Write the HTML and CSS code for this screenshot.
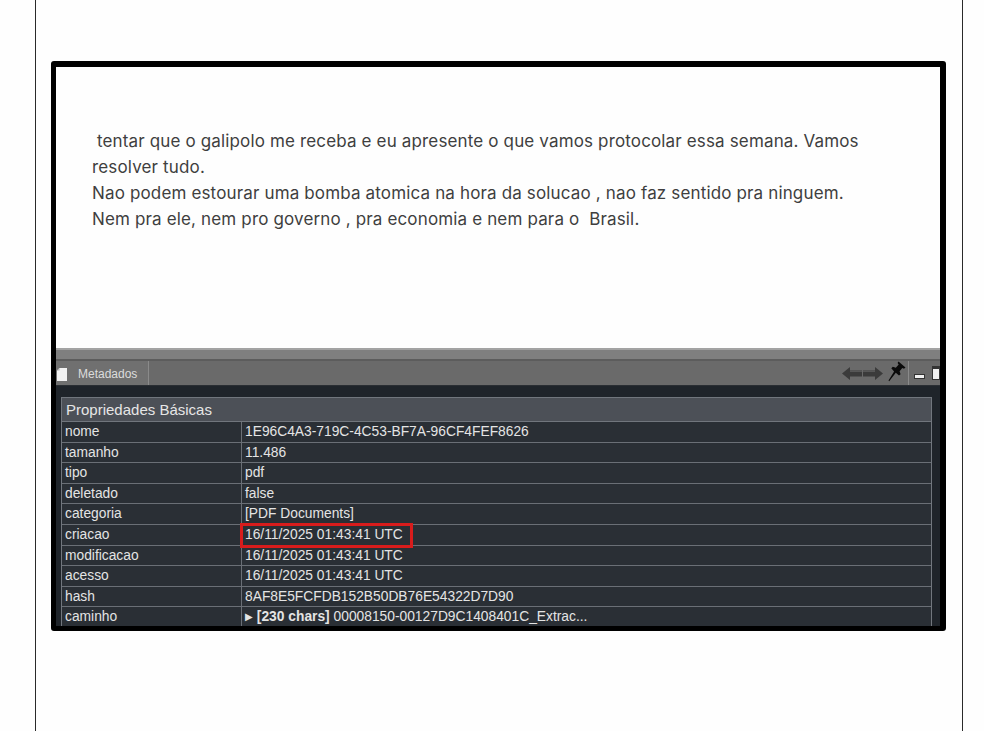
FILE: index.html
```html
<!DOCTYPE html>
<html lang="pt">
<head>
<meta charset="utf-8">
<title>Metadados</title>
<link rel="stylesheet" href="styles.css">
</head>
<body>
<div class="page">
  <div class="frame">
    <div class="doc">
      <p class="msg">&nbsp;tentar que o galipolo me receba e eu apresente o que vamos protocolar essa semana. Vamos<br>resolver tudo.<br>Nao podem estourar uma bomba atomica na hora da solucao , nao faz sentido pra ninguem.<br>Nem pra ele, nem pro governo , pra economia e nem para o &nbsp;Brasil.</p>
    </div>
    <div class="splitter"></div>
    <div class="tabbar">
      <div class="tab">
        <svg class="tab-icon" width="11" height="13" viewBox="0 0 11 13"><path d="M0 2.5 L2.5 0 H10 V13 H0 Z" fill="#f2f2f2"/><path d="M0 2.5 H2.5 V0" fill="#b5b5b5"/></svg>
        <span class="tab-label">Metadados</span>
      </div>
      <div class="tools">
        <svg class="arrow" width="20" height="13" viewBox="0 0 20 13"><path d="M0 6.5 L8 0 V3.5 H20 V9.5 H8 V13 Z" fill="#3b3b3b"/><path d="M8 3.5 H20 V5 H8 Z" fill="#575757"/></svg>
        <svg class="arrow" width="20" height="13" viewBox="0 0 20 13"><path d="M20 6.5 L12 0 V3.5 H0 V9.5 H12 V13 Z" fill="#3b3b3b"/><path d="M12 3.5 H0 V5 H12 Z" fill="#575757"/></svg>
        <svg class="pin" width="18" height="21" viewBox="0 0 18 21"><path d="M10.5 0.5 L17.5 6.5 L16 7.8 L14.3 6.9 L11.6 10.2 L12.6 13.2 L11 14.6 L7.8 11.8 L1.2 20.2 L0.5 19.6 L6.1 10.4 L3.3 7.3 L4.8 5.8 L7.8 6.8 L10.7 3.6 L9.6 1.9 Z" fill="#0a0a0a"/></svg>
        <span class="tool-sep"></span>
        <span class="btn-min"></span>
        <span class="btn-max"></span>
      </div>
    </div>
    <div class="panel">
      <div class="props">
        <div class="head">Propriedades Básicas</div>
        <div class="row"><div class="k">nome</div><div class="v">1E96C4A3-719C-4C53-BF7A-96CF4FEF8626</div></div>
        <div class="row"><div class="k">tamanho</div><div class="v">11.486</div></div>
        <div class="row"><div class="k">tipo</div><div class="v">pdf</div></div>
        <div class="row"><div class="k">deletado</div><div class="v">false</div></div>
        <div class="row"><div class="k">categoria</div><div class="v">[PDF Documents]</div></div>
        <div class="row"><div class="k">criacao</div><div class="v hl">16/11/2025 01:43:41 UTC<span class="mark"></span></div></div>
        <div class="row"><div class="k">modificacao</div><div class="v">16/11/2025 01:43:41 UTC</div></div>
        <div class="row"><div class="k">acesso</div><div class="v">16/11/2025 01:43:41 UTC</div></div>
        <div class="row"><div class="k">hash</div><div class="v">8AF8E5FCFDB152B50DB76E54322D7D90</div></div>
        <div class="row"><div class="k">caminho</div><div class="v"><span class="tri">&#9654;</span> <b>[230 chars]</b> 00008150-00127D9C1408401C_Extrac...</div></div>
      </div>
    </div>
  </div>
</div>
</body>
</html>
```

FILE: styles.css
```css
html, body {
  margin: 0;
  background: #fefefe;
}

.page {
  box-sizing: border-box;
  margin-left: 35px;
  width: 928px;
  height: 731px;
  border-left: 1px solid #2a2a2a;
  border-right: 1px solid #2a2a2a;
  padding-top: 61px;
  overflow: hidden;
}

.frame {
  box-sizing: border-box;
  margin-left: 15px;
  width: 895px;
  height: 570px;
  border: 5px solid #000;
  border-top-width: 6px;
  border-right-width: 6px;
  border-radius: 3px;
  display: flex;
  flex-direction: column;
  overflow: hidden;
  background: #1f242a;
}

.doc {
  box-sizing: border-box;
  height: 281px;
  flex: none;
  background: #fefefe;
  padding: 61px 0 0 36px;
}

.msg {
  margin: 0;
  font-family: Inter, "Liberation Sans", Arial, sans-serif;
  font-size: 17px;
  line-height: 26px;
  letter-spacing: 0.15px;
  color: #3f3f3f;
  white-space: nowrap;
}

.splitter {
  box-sizing: border-box;
  flex: none;
  height: 13px;
  background: #7f7f7f;
  border-top: 2px solid #a3a3a3;
  border-bottom: 2px solid #5c5c5c;
}

.tabbar {
  box-sizing: border-box;
  flex: none;
  height: 25px;
  background: #6a6a6a;
  border-bottom: 1px solid #2a2e33;
  display: flex;
  align-items: stretch;
}

.tab {
  width: 93px;
  box-sizing: border-box;
  display: flex;
  align-items: center;
  gap: 10px;
  padding-left: 1px;
  padding-top: 2px;
  background: #707070;
  border-right: 1px solid #8a8a8a;
}

.tab-icon {
  display: block;
}

.tab-label {
  font-family: "Liberation Sans", Arial, sans-serif;
  font-size: 12px;
  color: #dcdcdc;
}

.tools {
  margin-left: auto;
  display: flex;
  align-items: center;
  gap: 1px;
}

.arrow {
  display: block;
  margin-top: 1px;
}

.pin {
  display: block;
  margin-left: 4px;
  margin-top: -3px;
}

.tool-sep {
  width: 1px;
  height: 24px;
  background: #8a8a8a;
  margin: 0 4px 0 1px;
}

.btn-min {
  width: 9px;
  height: 3px;
  background: #f0f0f0;
  border: 1px solid #333;
  margin-top: 7px;
}

.btn-max {
  width: 6px;
  height: 10px;
  background: #f0f0f0;
  border: 1px solid #333;
  border-top-width: 3px;
  margin-left: 6px;
}

.panel {
  flex: 1;
  min-height: 0;
  background: #1f242a;
  padding: 11px 8px 0 5px;
  overflow: hidden;
}

.props {
  border-left: 1px solid #71767d;
  border-right: 1px solid #71767d;
  border-top: 1px solid #71767d;
  font-family: "Liberation Sans", Arial, sans-serif;
  color: #e4e4e4;
}

.head {
  box-sizing: border-box;
  height: 24px;
  line-height: 23px;
  padding-left: 4px;
  font-size: 15px;
  background: #4c5057;
  border-bottom: 1px solid #71767d;
  color: #e6e6e6;
}

.row {
  box-sizing: border-box;
  display: grid;
  grid-template-columns: 180px 1fr;
  height: 20.6px;
  border-bottom: 1px solid #6a6f76;
  background: #2a2f35;
  font-size: 13.8px;
  line-height: 20px;
}

.k {
  padding-left: 3px;
  border-right: 1px solid #6a6f76;
  white-space: nowrap;
}

.v {
  padding-left: 3px;
  white-space: nowrap;
}

.v b {
  font-weight: bold;
}

.tri {
  font-size: 10px;
  position: relative;
  top: -1px;
}

.hl {
  position: relative;
}

.mark {
  position: absolute;
  left: -2px;
  top: -2px;
  width: 167px;
  height: 19px;
  border: 3px solid #d81c1c;
}
```
